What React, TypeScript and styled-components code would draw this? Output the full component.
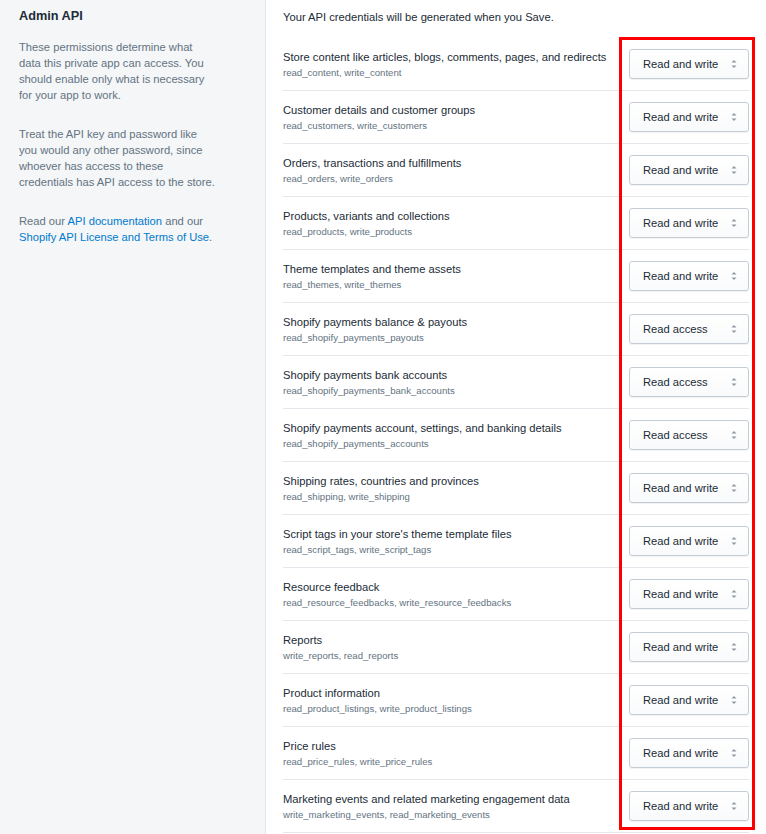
import styled, { createGlobalStyle } from "styled-components";

const GlobalStyle = createGlobalStyle`
  html, body {
    margin: 0;
    padding: 0;
    background: #ffffff;
  }
  body {
    font-family: "Liberation Sans", Arial, sans-serif;
    color: #212b36;
    -webkit-font-smoothing: antialiased;
  }
`;

const Page = styled.div`
  display: grid;
  grid-template-columns: 266px 1fr;
  width: 766px;
  height: 834px;
  overflow: hidden;
  position: relative;
`;

const Sidebar = styled.aside`
  background: #f4f6f8;
  border-right: 1px solid #e3e7eb;
  padding: 7px 19px 0 19px;
`;

const SidebarTitle = styled.h2`
  margin: 0 0 14px;
  font-size: 12.7px;
  line-height: 18px;
  font-weight: 700;
  color: #212b36;
`;

const SidebarText = styled.p`
  margin: 0 0 23px;
  max-width: 198px;
  font-size: 11.2px;
  line-height: 16px;
  color: #637381;
`;

const TextLink = styled.a`
  color: #007ace;
  text-decoration: none;
`;

const Main = styled.main`
  padding: 9px 17px 0 17px;
`;

const Intro = styled.p`
  margin: 0 0 13px;
  font-size: 11.2px;
  line-height: 16px;
  color: #212b36;
`;

const Row = styled.div`
  display: flex;
  align-items: center;
  justify-content: space-between;
  height: 52px;
  border-bottom: 1px solid #e3e7eb;
`;

const RowText = styled.div`
  display: flex;
  flex-direction: column;
  padding-top: 2px;
`;

const RowTitle = styled.span`
  font-size: 11.2px;
  line-height: 16px;
  color: #212b36;
`;

const Scopes = styled.span`
  font-size: 9.6px;
  line-height: 16px;
  color: #637381;
`;

const Select = styled.div`
  box-sizing: border-box;
  flex: none;
  width: 120px;
  height: 30px;
  display: flex;
  align-items: center;
  justify-content: space-between;
  padding: 0 11px 0 13px;
  background: linear-gradient(to bottom, #ffffff, #f9fafb);
  border: 1px solid #c4cdd5;
  border-radius: 3px;
  box-shadow: 0 1px 0 rgba(22, 29, 37, 0.05);
  font-size: 11.2px;
  color: #212b36;
`;

const Highlight = styled.div`
  position: absolute;
  left: 619px;
  top: 37px;
  width: 136px;
  height: 793px;
  box-sizing: border-box;
  border: 3px solid #ff0000;
  pointer-events: none;
`;

function Arrows() {
  return (
    <svg width="6" height="10" viewBox="0 0 6 10">
      <path d="M3 1 L5.5 3.5 L0.5 3.5 Z" fill="#8c9aa6" />
      <path d="M3 9 L5.5 6.5 L0.5 6.5 Z" fill="#8c9aa6" />
    </svg>
  );
}

const permissions = [
  ["Store content like articles, blogs, comments, pages, and redirects", "read_content, write_content", "Read and write"],
  ["Customer details and customer groups", "read_customers, write_customers", "Read and write"],
  ["Orders, transactions and fulfillments", "read_orders, write_orders", "Read and write"],
  ["Products, variants and collections", "read_products, write_products", "Read and write"],
  ["Theme templates and theme assets", "read_themes, write_themes", "Read and write"],
  ["Shopify payments balance & payouts", "read_shopify_payments_payouts", "Read access"],
  ["Shopify payments bank accounts", "read_shopify_payments_bank_accounts", "Read access"],
  ["Shopify payments account, settings, and banking details", "read_shopify_payments_accounts", "Read access"],
  ["Shipping rates, countries and provinces", "read_shipping, write_shipping", "Read and write"],
  ["Script tags in your store's theme template files", "read_script_tags, write_script_tags", "Read and write"],
  ["Resource feedback", "read_resource_feedbacks, write_resource_feedbacks", "Read and write"],
  ["Reports", "write_reports, read_reports", "Read and write"],
  ["Product information", "read_product_listings, write_product_listings", "Read and write"],
  ["Price rules", "read_price_rules, write_price_rules", "Read and write"],
  ["Marketing events and related marketing engagement data", "write_marketing_events, read_marketing_events", "Read and write"],
];

export default function App() {
  return (
    <>
      <GlobalStyle />
      <Page>
        <Sidebar>
          <SidebarTitle>Admin API</SidebarTitle>
          <SidebarText>
            These permissions determine what data this private app can access.
            You should enable only what is necessary for your app to work.
          </SidebarText>
          <SidebarText>
            Treat the API key and password like you would any other password,
            since whoever has access to these credentials has API access to the
            store.
          </SidebarText>
          <SidebarText>
            Read our <TextLink href="#">API documentation</TextLink> and our{" "}
            <TextLink href="#">Shopify API License and Terms of Use</TextLink>.
          </SidebarText>
        </Sidebar>
        <Main>
          <Intro>Your API credentials will be generated when you Save.</Intro>
          {permissions.map(([title, scopes, access]) => (
            <Row key={title}>
              <RowText>
                <RowTitle>{title}</RowTitle>
                <Scopes>{scopes}</Scopes>
              </RowText>
              <Select>
                <span>{access}</span>
                <Arrows />
              </Select>
            </Row>
          ))}
        </Main>
        <Highlight />
      </Page>
    </>
  );
}
